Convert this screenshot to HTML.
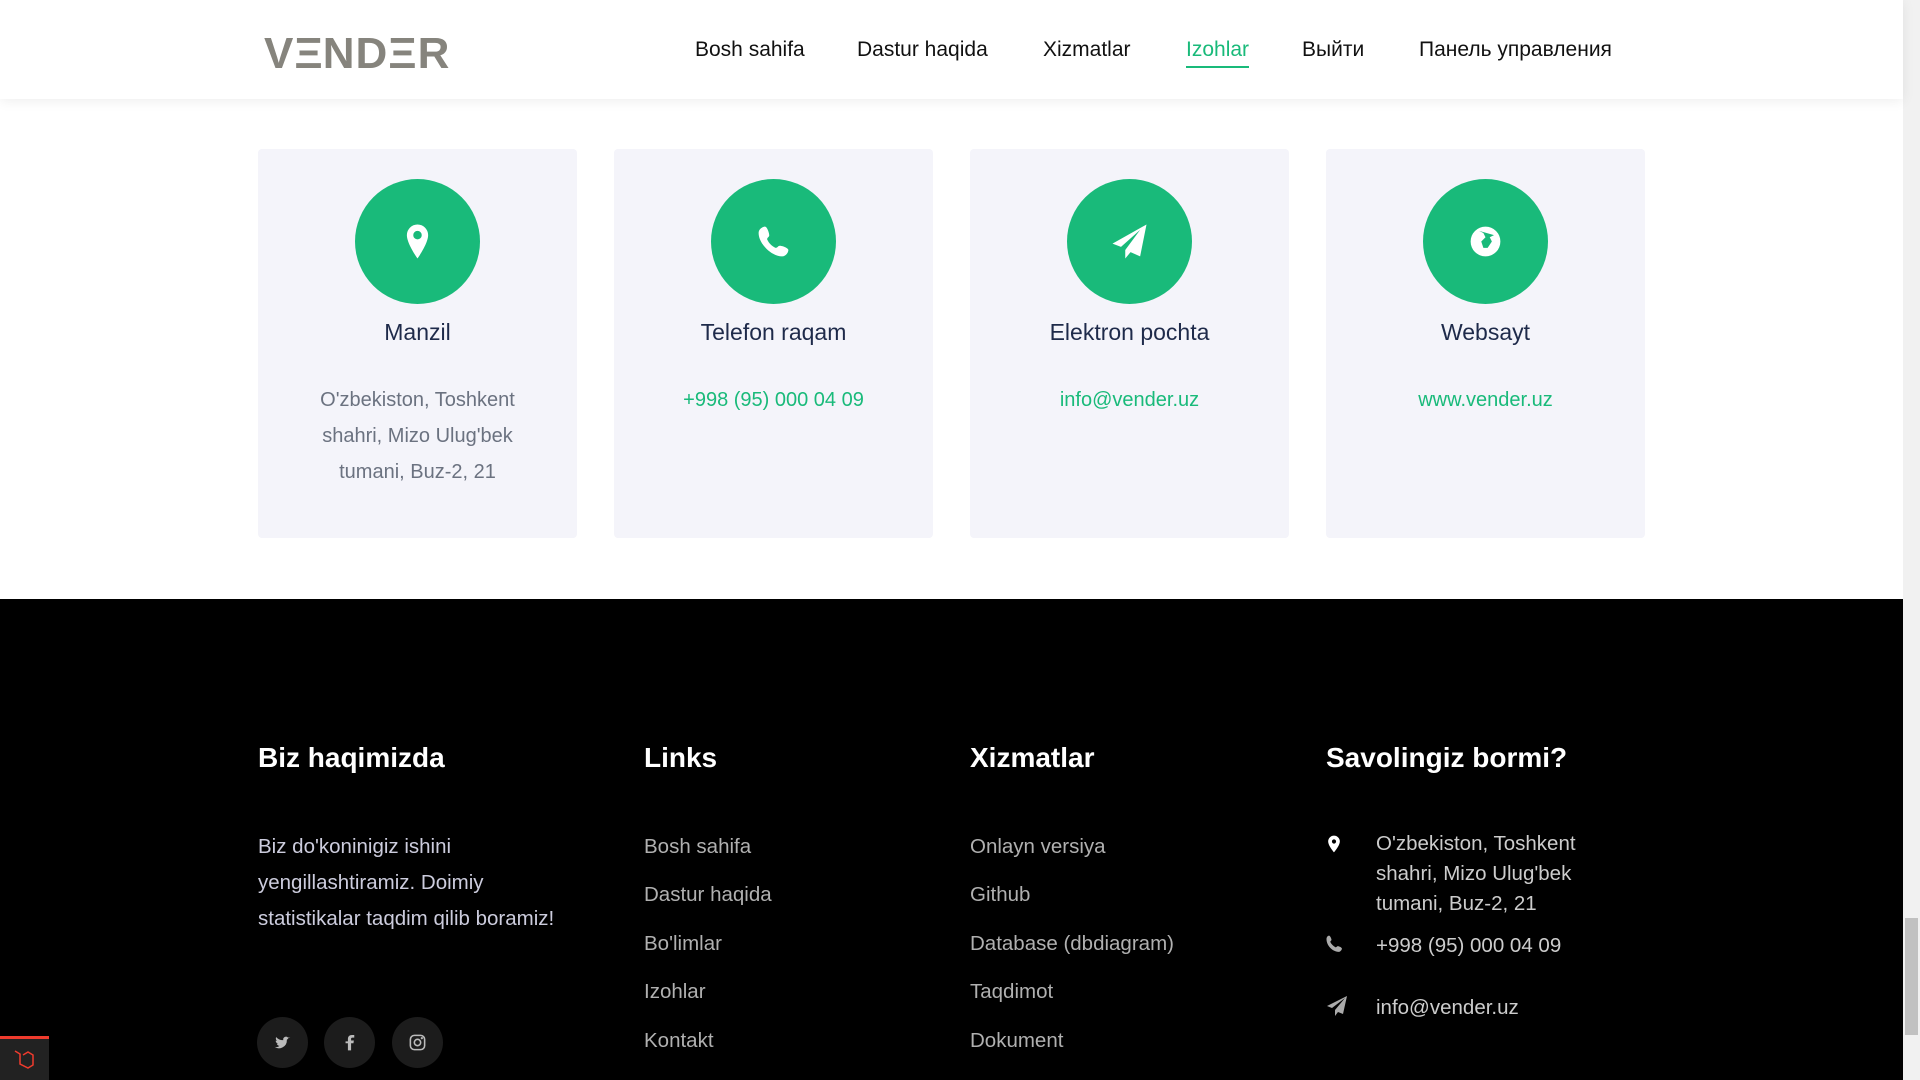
<!DOCTYPE html>
<html><head><meta charset="utf-8"><style>
*{margin:0;padding:0;box-sizing:border-box}
body{width:1920px;height:1080px;overflow:hidden;background:#fff;font-family:"Liberation Sans",sans-serif;position:relative}
.hdr{position:absolute;left:0;top:0;width:1903px;height:99px;background:#fff;box-shadow:0 2px 12px rgba(0,0,0,.07);z-index:2}
.logo{position:absolute;left:264px;top:29px;font-size:44px;font-weight:bold;color:#86847d;letter-spacing:1px}
.nav a{position:absolute;top:38px;font-size:21px;color:#111;text-decoration:none}
.nav a.act{color:#19ba7a;border-bottom:2px solid #19ba7a;padding-bottom:4px}
.card{position:absolute;top:149px;width:319px;height:389px;background:#f4f4fa;border-radius:4px;text-align:center}
.circ{position:absolute;left:97px;top:30px;width:125px;height:125px;border-radius:50%;background:#19ba7a}
.circ svg{position:absolute;left:37px;top:37px}
.ct{position:absolute;top:170px;left:0;width:100%;font-size:23px;color:#1e2a4a}
.cd{position:absolute;top:233px;left:30px;right:30px;font-size:20px;line-height:36px;color:#6b7280}
.cd.g{color:#19ba7a}
.foot{position:absolute;left:0;top:599px;width:1903px;height:481px;background:#000}
.h{position:absolute;top:742px;font-size:28px;font-weight:bold;color:#fff}
.l{position:absolute;font-size:20.5px;color:#b0b0b0}
.about{position:absolute;left:258px;top:829px;width:320px;font-size:20.5px;line-height:36px;color:#ccd}
.soc{position:absolute;top:1017px;width:51px;height:51px;border-radius:50%;background:#1c1c1c}
.soc svg{position:absolute;left:16px;top:16px}
.ci{position:absolute;left:1376px;font-size:20.5px;line-height:30px;color:#ccc}
</style></head><body>
<div class="hdr">
<div class="logo">V<span style="letter-spacing:0">Ξ</span>ND<span>Ξ</span><span style="color:#86847d">R</span></div>
<div class="nav">
<a style="left:695px">Bosh sahifa</a>
<a style="left:857px">Dastur haqida</a>
<a style="left:1043px">Xizmatlar</a>
<a class="act" style="left:1186px">Izohlar</a>
<a style="left:1302px">Выйти</a>
<a style="left:1419px">Панель управления</a>
</div></div>

<div class="card" style="left:258px"><div class="circ"><svg width="51" height="51" viewBox="0 0 24 24"><path d="M12 4a5 5 0 0 0-5 5c0 4 5 11 5 11s5-7 5-11a5 5 0 0 0-5-5zm0 7a2 2 0 1 1 0-4 2 2 0 0 1 0 4z" fill="#fff"/></svg></div><div class="ct">Manzil</div><div class="cd">O'zbekiston, Toshkent shahri, Mizo Ulug'bek tumani, Buz-2, 21</div></div>
<div class="card" style="left:614px"><div class="circ"><svg width="51" height="51" viewBox="0 0 24 24"><path d="M8 5c1 0 2 3 2 4s-1 1-1 2c1 2 2 3 4 4 1 0 1-1 2-1s4 1 4 2-1 3-3 3C11 19 5 13 5 8c0-2 2-3 3-3z" fill="#fff"/></svg></div><div class="ct">Telefon raqam</div><div class="cd g">+998 (95) 000 04 09</div></div>
<div class="card" style="left:970px"><div class="circ"><svg width="51" height="51" viewBox="0 0 24 24"><path d="M20 4L4 13l4 1.5 9-8-7 9.5v4l2.5-3 4.5 2z" fill="#fff"/></svg></div><div class="ct">Elektron pochta</div><div class="cd g">info@vender.uz</div></div>
<div class="card" style="left:1326px"><div class="circ"><svg width="51" height="51" viewBox="0 0 24 24"><circle cx="12" cy="12" r="7" fill="#fff"/><path d="M9 7l2 1 1 2-2 2 1 3h2l2-3-1-2 2-1" fill="#19ba7a"/></svg></div><div class="ct">Websayt</div><div class="cd g">www.vender.uz</div></div>

<div class="foot"></div>
<div class="h" style="left:258px">Biz haqimizda</div>
<div class="h" style="left:644px">Links</div>
<div class="h" style="left:970px">Xizmatlar</div>
<div class="h" style="left:1326px">Savolingiz bormi?</div>
<div class="about">Biz do'koninigiz ishini yengillashtiramiz. Doimiy statistikalar taqdim qilib boramiz!</div>
<div class="l" style="left:644px;top:835px">Bosh sahifa</div>
<div class="l" style="left:644px;top:883px">Dastur haqida</div>
<div class="l" style="left:644px;top:932px">Bo'limlar</div>
<div class="l" style="left:644px;top:980px">Izohlar</div>
<div class="l" style="left:644px;top:1029px">Kontakt</div>
<div class="l" style="left:970px;top:835px">Onlayn versiya</div>
<div class="l" style="left:970px;top:883px">Github</div>
<div class="l" style="left:970px;top:932px">Database (dbdiagram)</div>
<div class="l" style="left:970px;top:980px">Taqdimot</div>
<div class="l" style="left:970px;top:1029px">Dokument</div>
<div class="soc" style="left:257px"><svg width="19" height="19" viewBox="0 0 24 24"><path d="M22 5c-1 .5-2 .7-3 .8a3.5 3.5 0 0 0-6 3.2C9 9 6 7.5 4 5c-1 2 0 4 1 5-.6 0-1-.2-1.6-.4 0 2 1.5 3.5 3 4-.5.2-1 .2-1.6.1.5 1.5 2 2.5 3.5 2.5A7 7 0 0 1 2 17.6 10 10 0 0 0 17.5 9V8.5c.8-.6 1.5-1.3 2-2z" fill="#bbb"/></svg></div>
<div class="soc" style="left:324px"><svg width="19" height="19" viewBox="0 0 24 24"><path d="M14 22v-9h3l.5-3.5H14V7.5c0-1 .3-1.7 1.8-1.7H18V2.6c-.4 0-1.6-.1-3-.1-3 0-5 1.8-5 5.1v2.9H7V13h3v9z" fill="#bbb"/></svg></div>
<div class="soc" style="left:392px"><svg width="19" height="19" viewBox="0 0 24 24" fill="none" stroke="#bbb" stroke-width="2"><rect x="3" y="3" width="18" height="18" rx="5"/><circle cx="12" cy="12" r="4"/><circle cx="17.5" cy="6.5" r=".5" fill="#bbb"/></svg></div>
<svg style="position:absolute;left:1324px;top:832px" width="20" height="24" viewBox="0 0 24 24"><path d="M12 2a7 7 0 0 0-7 7c0 5 7 13 7 13s7-8 7-13a7 7 0 0 0-7-7zm0 9.5a2.5 2.5 0 1 1 0-5 2.5 2.5 0 0 1 0 5z" fill="#fff"/></svg>
<svg style="position:absolute;left:1324px;top:934px" width="20" height="20" viewBox="0 0 24 24"><path d="M6 2c1.5 0 3 4 3 5s-1.5 1.5-1.5 2.5c1.5 3 3.5 5 6.5 6.5 1 0 1.5-1.5 2.5-1.5s5 1.5 5 3-2 4-4 4C10 21 3 14 3 6c0-2 1.5-4 3-4z" fill="#aaa"/></svg>
<svg style="position:absolute;left:1325px;top:994px" width="24" height="24" viewBox="0 0 24 24"><path d="M22 2L2 12l5 2 13-10-10 12v6l3-4 5 2z" fill="#aaa"/></svg>
<div class="ci" style="top:829px">O'zbekiston, Toshkent<br>shahri, Mizo Ulug'bek<br>tumani, Buz-2, 21</div>
<div class="ci" style="top:931px">+998 (95) 000 04 09</div>
<div class="ci" style="top:993px">info@vender.uz</div>
<div style="position:absolute;left:0;top:1036px;width:49px;height:44px;background:#222;border-top:3px solid #ef3b2d"></div>
<svg style="position:absolute;left:12px;top:1046px" width="24" height="24" viewBox="0 0 24 24" fill="none" stroke="#ef3b2d" stroke-width="1.5"><path d="M3 5l5 3v10l8 4 5-3V9l-5-3-5 3"/></svg>
<div style="position:absolute;left:1903px;top:0;width:17px;height:1080px;background:#f1f1f1"></div>
<div style="position:absolute;left:1905px;top:918px;width:13px;height:117px;background:#c1c1c1"></div>
</body></html>
